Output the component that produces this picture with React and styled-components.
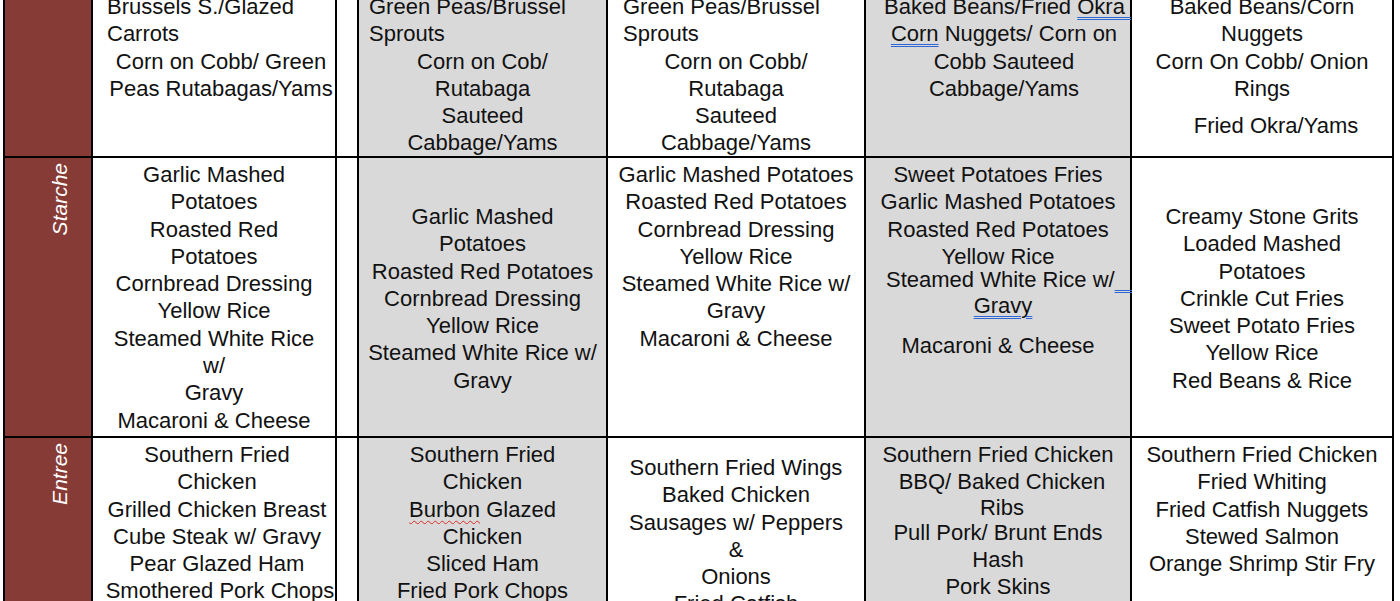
import React from 'react'
import styled, { createGlobalStyle } from 'styled-components'

const GlobalStyle = createGlobalStyle`
  html, body {
    margin: 0;
    padding: 0;
    background: #fff;
    height: 601px;
    overflow: hidden;
  }
  body {
    font-family: "Liberation Sans", Arial, sans-serif;
  }
`

const Sheet = styled.div`
  display: grid;
  grid-template-columns: 86px 242px 20px 247px 256px 264px 260px;
  grid-template-rows: 166px 278px 200px;
  gap: 2px;
  width: max-content;
  background: #000;
  border: 2px solid #000;
  margin: -12px 0 0 3px;
`

const LabelCell = styled.div`
  background: #873b37;
  display: flex;
  align-items: flex-start;
  justify-content: center;
  padding: 5px 0 0 22px;
`

const Label = styled.span`
  writing-mode: vertical-rl;
  transform: rotate(180deg);
  color: #fff;
  font-style: italic;
  font-size: 21px;
  line-height: 1;
`

const Spacer = styled.div`
  background: #fff;
`

const Cell = styled.div`
  background: ${p => (p.$shade ? '#d9d9d9' : '#fff')};
  display: flex;
  flex-direction: column;
  justify-content: ${p => (p.$middle ? 'center' : 'flex-start')};
  padding: ${p => p.$top}px ${p => p.$right}px 0 6px;
  color: #111;
`

const Line = styled.div`
  font-size: 22px;
  line-height: 27.3px;
  white-space: nowrap;
  text-align: ${p => (p.$left ? 'left' : 'center')};
  padding-left: ${p => p.$indent}px;
  margin-top: ${p => p.$gap}px;
`

const Suggest = styled.span`
  text-decoration: underline double #2f66d6;
  text-decoration-thickness: 1px;
  text-underline-offset: 3px;
`

const Spell = styled.span`
  text-decoration: underline wavy #d93025;
  text-decoration-thickness: 1px;
  text-underline-offset: 3px;
`

const rows = [
  {
    label: null,
    cells: [
      {
        right: 0,
        lines: [
          { t: 'Brussels S./Glazed', left: true, indent: 8 },
          { t: 'Carrots', left: true, indent: 8 },
          { t: 'Corn on Cobb/ Green', indent: 8 },
          { t: 'Peas Rutabagas/Yams', indent: 8 },
        ],
      },
      {
        shade: true,
        lines: [
          { t: 'Green Peas/Brussel', left: true, indent: 4 },
          { t: 'Sprouts', left: true, indent: 4 },
          'Corn on Cob/',
          'Rutabaga',
          'Sauteed',
          'Cabbage/Yams',
        ],
      },
      {
        lines: [
          { t: 'Green Peas/Brussel', left: true, indent: 9 },
          { t: 'Sprouts', left: true, indent: 9 },
          'Corn on Cobb/',
          'Rutabaga',
          'Sauteed',
          'Cabbage/Yams',
        ],
      },
      {
        shade: true,
        lines: [
          { t: <>Baked Beans/Fried <Suggest>Okra&nbsp;</Suggest></>, indent: 12 },
          { t: <><Suggest>Corn</Suggest> Nuggets/ Corn on</>, indent: 12 },
          { t: 'Cobb Sauteed', indent: 12 },
          { t: 'Cabbage/Yams', indent: 12 },
        ],
      },
      {
        lines: [
          'Baked Beans/Corn',
          'Nuggets',
          'Corn On Cobb/ Onion',
          'Rings',
          { t: 'Fried Okra/Yams', indent: 28, gap: 10 },
        ],
      },
    ],
  },
  {
    label: 'Starche',
    cells: [
      {
        lines: [
          'Garlic Mashed',
          'Potatoes',
          'Roasted Red',
          'Potatoes',
          'Cornbread Dressing',
          'Yellow Rice',
          'Steamed White Rice',
          'w/',
          'Gravy',
          'Macaroni & Cheese',
        ],
      },
      {
        shade: true,
        middle: true,
        lines: [
          'Garlic Mashed',
          'Potatoes',
          'Roasted Red Potatoes',
          'Cornbread Dressing',
          'Yellow Rice',
          'Steamed White Rice w/',
          'Gravy',
        ],
      },
      {
        lines: [
          'Garlic Mashed Potatoes',
          'Roasted Red Potatoes',
          'Cornbread Dressing',
          'Yellow Rice',
          'Steamed White Rice w/',
          'Gravy',
          'Macaroni & Cheese',
        ],
      },
      {
        shade: true,
        lines: [
          'Sweet Potatoes Fries',
          'Garlic Mashed Potatoes',
          'Roasted Red Potatoes',
          'Yellow Rice',
          { t: <>Steamed White Rice w/<Suggest>&nbsp;&nbsp;&nbsp;</Suggest></>, indent: 14, gap: -4 },
          { t: <Suggest>Gravy</Suggest>, indent: 10, gap: -1 },
          { t: 'Macaroni & Cheese', gap: 12 },
        ],
      },
      {
        middle: true,
        lines: [
          'Creamy Stone Grits',
          'Loaded Mashed',
          'Potatoes',
          'Crinkle Cut Fries',
          'Sweet Potato Fries',
          'Yellow Rice',
          'Red Beans & Rice',
        ],
      },
    ],
  },
  {
    label: 'Entree',
    cells: [
      {
        right: 0,
        lines: [
          'Southern Fried',
          'Chicken',
          'Grilled Chicken Breast',
          'Cube Steak w/ Gravy',
          'Pear Glazed Ham',
          { t: 'Smothered Pork Chops', indent: 6 },
          'Baked Chicken',
        ],
      },
      {
        shade: true,
        lines: [
          'Southern Fried',
          'Chicken',
          { t: <><Spell>Burbon</Spell> Glazed</> },
          'Chicken',
          'Sliced Ham',
          'Fried Pork Chops',
          'Meatloaf',
        ],
      },
      {
        top: 16,
        lines: [
          'Southern Fried Wings',
          'Baked Chicken',
          'Sausages w/ Peppers',
          '&',
          'Onions',
          'Fried Catfish',
        ],
      },
      {
        shade: true,
        lines: [
          'Southern Fried Chicken',
          { t: 'BBQ/ Baked Chicken', indent: 8 },
          { t: 'Ribs', indent: 8, gap: -2 },
          { t: 'Pull Pork/ Brunt Ends', gap: -2 },
          'Hash',
          'Pork Skins',
        ],
      },
      {
        lines: [
          'Southern Fried Chicken',
          'Fried Whiting',
          'Fried Catfish Nuggets',
          'Stewed Salmon',
          'Orange Shrimp Stir Fry',
        ],
      },
    ],
  },
]

const MenuCell = ({ cell }) => (
  <Cell $shade={cell.shade} $middle={cell.middle} $top={cell.top ?? 3} $right={cell.right ?? 6}>
    {cell.lines.map((line, i) => {
      const l = typeof line === 'string' ? { t: line } : line
      return (
        <Line key={i} $left={l.left} $indent={l.indent ?? 0} $gap={l.gap ?? 0}>
          {l.t}
        </Line>
      )
    })}
  </Cell>
)

const App = () => {
  return (
    <>
      <GlobalStyle />
      <Sheet>
        {rows.map((row, r) => (
          <React.Fragment key={r}>
            <LabelCell>{row.label && <Label>{row.label}</Label>}</LabelCell>
            <MenuCell cell={row.cells[0]} />
            <Spacer />
            {row.cells.slice(1).map((cell, c) => (
              <MenuCell key={c} cell={cell} />
            ))}
          </React.Fragment>
        ))}
      </Sheet>
    </>
  )
}

export default App
